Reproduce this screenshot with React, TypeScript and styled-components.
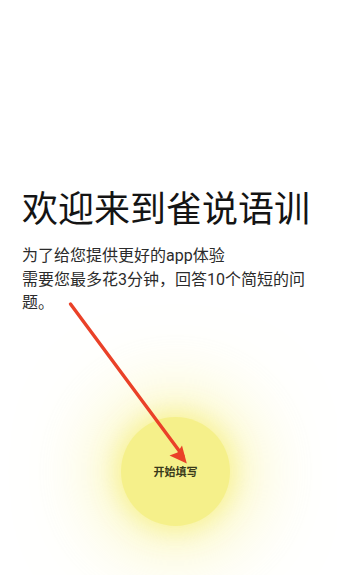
import React from "react";
import styled, { createGlobalStyle } from "styled-components";

const Global = createGlobalStyle`
  html, body { margin: 0; padding: 0; background: #ffffff; }
  body { font-family: Roboto, "Noto Sans CJK SC", sans-serif; }
  * { box-sizing: border-box; }
`;

const Page = styled.div`
  position: relative;
  width: 337px;
  height: 575px;
  overflow: hidden;
  background: #ffffff;
  display: flex;
  flex-direction: column;
  padding: 185px 22px 0 22px;
`;

const Title = styled.h1`
  margin: 0;
  font-family: "Noto Sans CJK SC", sans-serif;
  font-size: 36px;
  line-height: 43px;
  font-weight: 400;
  color: #141414;
  letter-spacing: 0;
  white-space: nowrap;
`;

const Intro = styled.p`
  margin: 16px 0 0 0;
  font-family: Roboto, "Noto Sans CJK SC", sans-serif;
  font-size: 16px;
  line-height: 23.5px;
  color: #2b2b2b;
  font-weight: 400;
`;

const StartButton = styled.button`
  margin: 102px 0 0 99px;
  width: 109px;
  height: 109px;
  border-radius: 50%;
  border: none;
  background: #f5f08a;
  box-shadow: 0 0 26px 4px rgba(245, 238, 120, 0.7),
    0 0 80px 22px rgba(245, 238, 120, 0.55);
  display: flex;
  align-items: center;
  justify-content: center;
  font-family: "Noto Sans CJK SC", sans-serif;
  font-size: 11px;
  font-weight: 700;
  color: #3a3a1a;
  padding: 0;
  cursor: pointer;
`;

const ArrowLayer = styled.svg`
  position: absolute;
  left: 0;
  top: 0;
  pointer-events: none;
`;

export default function App() {
  return (
    <>
      <Global />
      <Page>
        <Title>欢迎来到雀说语训</Title>
        <Intro>
          为了给您提供更好的app体验
          <br />
          需要您最多花3分钟，回答10个简短的问题。
        </Intro>
        <StartButton>开始填写</StartButton>
        <ArrowLayer width="337" height="575" viewBox="0 0 337 575">
          <line x1="70.5" y1="304" x2="183" y2="456" stroke="#ea4128" strokeWidth="3.4" strokeLinecap="round" />
          <path d="M186.8 463.5 L169.5 455.5 L177.5 452.5 L182 445.5 Z" fill="#ea4128" />
        </ArrowLayer>
      </Page>
    </>
  );
}
